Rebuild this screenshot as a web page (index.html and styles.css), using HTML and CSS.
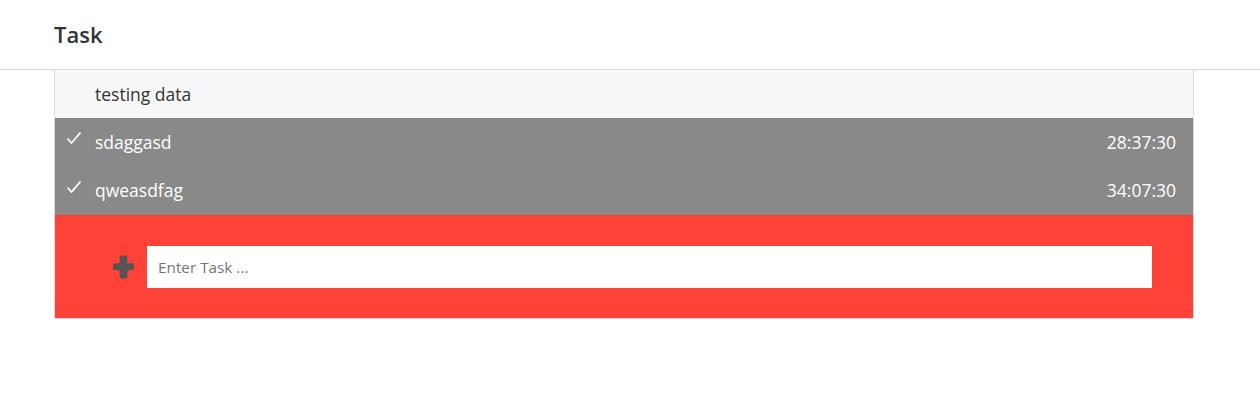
FILE: index.html
```html
<!DOCTYPE html>
<html>
<head>
<meta charset="utf-8">
<link rel="stylesheet" href="styles.css">
</head>
<body>
<header class="topbar">
  <h1 class="title">Task</h1>
</header>
<main class="panel">
  <ul class="tasks">
    <li class="task">
      <span class="check"></span>
      <span class="name">testing data</span>
      <span class="time"></span>
    </li>
    <li class="task done">
      <span class="check"><svg viewBox="0 0 16 14" width="16" height="14"><path d="M1.5 7.5 L5.5 12 L14.5 1.5" fill="none" stroke="#fff" stroke-width="1.8"/></svg></span>
      <span class="name">sdaggasd</span>
      <span class="time">28:37:30</span>
    </li>
    <li class="task done">
      <span class="check"><svg viewBox="0 0 16 14" width="16" height="14"><path d="M1.5 7.5 L5.5 12 L14.5 1.5" fill="none" stroke="#fff" stroke-width="1.8"/></svg></span>
      <span class="name">qweasdfag</span>
      <span class="time">34:07:30</span>
    </li>
  </ul>
  <form class="adder">
    <span class="plus"><svg viewBox="0 0 22 24" width="21" height="24"><rect x="7" y="0" width="8" height="24" rx="2" fill="#555"/><rect x="0" y="8" width="22" height="7.5" rx="2" fill="#555"/></svg></span>
    <input class="entry" type="text" placeholder="Enter Task ...">
  </form>
</main>
</body>
</html>
```

FILE: styles.css
```css
html, body {
  margin: 0;
  padding: 0;
  background: #fff;
  font-family: "Open Sans", "Noto Sans", sans-serif;
  color: #333;
}
.topbar {
  height: 69px;
  border-bottom: 1px solid #d6dadf;
  display: flex;
  align-items: center;
  padding-left: 54px;
  box-sizing: border-box;
  height: 70px;
  padding-bottom: 2px;
}
.title {
  margin: 0;
  font-size: 22px;
  font-weight: 600;
  color: #2f3337;
  letter-spacing: 0;
}
.panel {
  margin-left: 54px;
  width: 1138px;
  border-left: 1px solid #d6dadf;
  border-right: 1px solid #d6dadf;
  border-bottom: 1px solid #d6dadf;
}
.tasks {
  list-style: none;
  margin: 0;
  padding: 0;
}
.task {
  height: 48px;
  display: flex;
  align-items: center;
  background: #f8f8f8;
  font-size: 17.5px;
  padding-right: 17px;
}
.task.done {
  background: #898989;
  color: #fff;
}
.task + .task.done:last-child {
  height: 49px;
}
.check {
  width: 40px;
  height: 48px;
  display: flex;
  justify-content: flex-end;
  box-sizing: border-box;
  align-items: flex-start;
  padding-top: 13px;
}
.check svg {
  margin-right: 13px;
}
.name {
  flex: 1;
  margin-bottom: 1px;
}
.time {
  margin-bottom: 1px;
}
.adder {
  margin: 0;
  background: #ff4238;
  height: 103px;
  display: flex;
  align-items: center;
  padding-left: 57px;
  padding-right: 41px;
  box-sizing: border-box;
}
.plus {
  width: 35px;
  display: flex;
  align-items: center;
  padding-top: 1px;
  padding-left: 1px;
  box-sizing: border-box;
}
.entry {
  flex: 1;
  height: 42px;
  border: none;
  outline: none;
  box-sizing: border-box;
  padding: 0 11px;
  font-family: "Open Sans", "Noto Sans", sans-serif;
  font-size: 15.3px;
  color: #333;
  background: #fff;
  margin-top: 0;
}
.entry::placeholder {
  color: #757575;
}
```
